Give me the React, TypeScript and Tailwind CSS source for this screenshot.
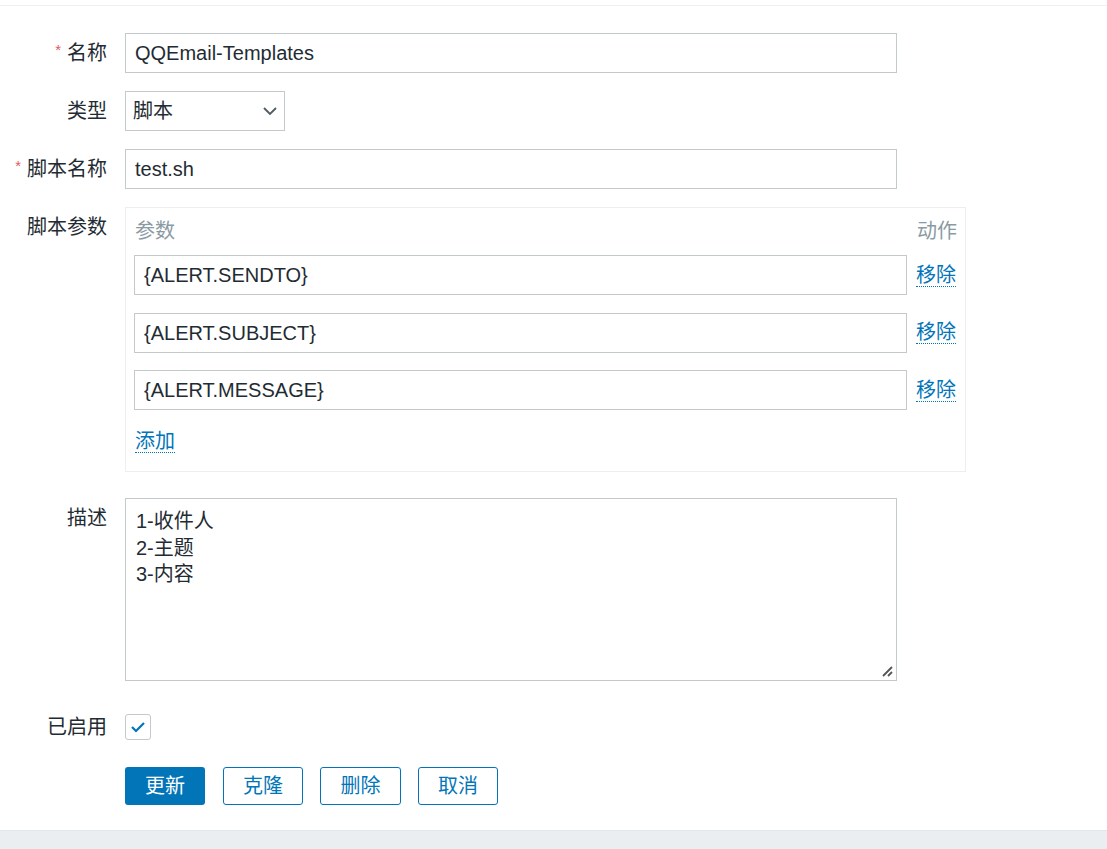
import { useState } from "react";

const FONT = '"Liberation Sans", "Noto Sans CJK SC", sans-serif';

function Label({ text, required }: { text: string; required?: boolean }) {
  return (
    <div className="w-[125px] shrink-0 h-[40px] pr-[18px] flex items-center justify-end text-[#1f2c33]">
      {required && <span className="text-[#e45959] text-[15px] mr-[6px] -mt-[6px]">*</span>}
      {text}
    </div>
  );
}

function TextInput({ value, className }: { value: string; className: string }) {
  return (
    <div className={`border border-[#c4c9cc] bg-white flex items-center px-[9px] text-[#1f2c33] ${className}`}>
      {value}
    </div>
  );
}

function LinkText({ children }: { children: string }) {
  return (
    <span className="text-[#0275b8] border-b border-dotted border-[#0275b8] leading-[22px] cursor-pointer">
      {children}
    </span>
  );
}

const params = ["{ALERT.SENDTO}", "{ALERT.SUBJECT}", "{ALERT.MESSAGE}"];

export default function App() {
  const [enabled, setEnabled] = useState(true);

  return (
    <div className="min-h-[849px] bg-white flex flex-col text-[20px]" style={{ fontFamily: FONT }}>
      <div className="h-[6px] border-b border-[#eef0f2]" />
      <div className="flex-1 pt-[27px] flex flex-col">
        <div className="flex mb-[18px]">
          <Label text="名称" required />
          <TextInput value="QQEmail-Templates" className="w-[772px] h-[40px]" />
        </div>

        <div className="flex mb-[18px]">
          <Label text="类型" />
          <div className="w-[160px] h-[40px] border border-[#c4c9cc] flex items-center justify-between pl-[7px] pr-[6px] text-[#1f2c33]">
            <span>脚本</span>
            <svg width="16" height="10" viewBox="0 0 16 10" fill="none" stroke="#4f5b61" strokeWidth="1.8">
              <path d="M2 2l6 6 6-6" />
            </svg>
          </div>
        </div>

        <div className="flex mb-[18px]">
          <Label text="脚本名称" required />
          <TextInput value="test.sh" className="w-[772px] h-[40px]" />
        </div>

        <div className="flex mb-[26px]">
          <Label text="脚本参数" />
          <div className="w-[841px] border border-[#eceff1] px-[8px] pt-[8px] pb-[10px]">
            <div className="flex h-[30px] items-center text-[#8a9aa3]">
              <div className="flex-1 pl-[1px]">参数</div>
              <div className="w-[40px]">动作</div>
            </div>
            <div className="mt-[9px] flex flex-col gap-[17.5px]">
              {params.map((p) => (
                <div key={p} className="flex items-center gap-[9px]">
                  <TextInput value={p} className="w-[773px] h-[40px]" />
                  <LinkText>移除</LinkText>
                </div>
              ))}
            </div>
            <div className="h-[40px] mt-[11px] flex items-center pl-[1px]">
              <LinkText>添加</LinkText>
            </div>
          </div>
        </div>

        <div className="flex mb-[26px]">
          <Label text="描述" />
          <div className="relative w-[772px] h-[183px] border border-[#c4c9cc] px-[10px] pt-[9px] leading-[26.5px] text-[#1f2c33]">
            <div>1-收件人</div>
            <div>2-主题</div>
            <div>3-内容</div>
            <svg className="absolute right-[2px] bottom-[2px]" width="14" height="14" viewBox="0 0 14 14" stroke="#555" strokeWidth="1.8">
              <path d="M12 3L3 12M12 8l-4 4" />
            </svg>
          </div>
        </div>

        <div className="flex items-center mb-[20px]">
          <Label text="已启用" />
          <button
            onClick={() => setEnabled(!enabled)}
            className="w-[26px] h-[26px] border border-[#c4c9cc] rounded-[3px] flex items-center justify-center bg-white -mt-[1px]"
          >
            {enabled && (
              <svg width="16" height="12" viewBox="0 0 16 12" fill="none" stroke="#0275b8" strokeWidth="2.2">
                <path d="M2 6l4 4 8-8" />
              </svg>
            )}
          </button>
        </div>

        <div className="flex pl-[125px]">
          <button className="w-[80px] h-[38px] rounded-[3px] bg-[#0275b8] text-white">更新</button>
          <button className="ml-[18px] w-[80px] h-[38px] rounded-[3px] border border-[#0275b8] text-[#0275b8]">克隆</button>
          <button className="ml-[17px] w-[81px] h-[38px] rounded-[3px] border border-[#0275b8] text-[#0275b8]">删除</button>
          <button className="ml-[17px] w-[80px] h-[38px] rounded-[3px] border border-[#0275b8] text-[#0275b8]">取消</button>
        </div>
      </div>
      <div className="h-[19px] bg-[#ebeef0] border-t border-[#e3e7ea]" />
    </div>
  );
}
